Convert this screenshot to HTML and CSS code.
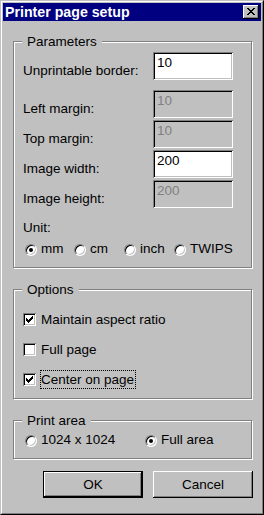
FILE: index.html
```html
<!DOCTYPE html>
<html lang="en">
<head>
  <meta charset="UTF-8">
  <title>Printer page setup</title>
  <link rel="stylesheet" href="styles.css">
</head>
<body>
  <div class="window">
    <div class="frame">
      <div class="titlebar">
        <span class="title">Printer page setup</span>
        <button class="close-btn">
          <svg width="8" height="7" viewBox="0 0 8 7" shape-rendering="crispEdges">
            <path d="M0 0h2v1h-2z M6 0h2v1h-2z M1 1h2v1h-2z M5 1h2v1h-2z M2 2h4v1h-4z M3 3h2v1h-2z M2 4h4v1h-4z M1 5h2v1h-2z M5 5h2v1h-2z M0 6h2v1h-2z M6 6h2v1h-2z" fill="#000"/>
          </svg>
        </button>
      </div>

      <div class="content">
        <!-- Parameters -->
        <div class="group group-params">
          <span class="group-title">Parameters</span>
          <div class="field field-first">
            <label>Unprintable border:</label>
            <input class="textbox" value="10">
          </div>
          <div class="field">
            <label>Left margin:</label>
            <input class="textbox" value="10" disabled>
          </div>
          <div class="field">
            <label>Top margin:</label>
            <input class="textbox" value="10" disabled>
          </div>
          <div class="field">
            <label>Image width:</label>
            <input class="textbox" value="200">
          </div>
          <div class="field">
            <label>Image height:</label>
            <input class="textbox" value="200" disabled>
          </div>
          <div class="unit-label">Unit:</div>
          <div class="radio-row unit-row">
            <div class="radio-item"><span class="radio checked"></span>mm</div>
            <div class="radio-item"><span class="radio"></span>cm</div>
            <div class="radio-item"><span class="radio"></span>inch</div>
            <div class="radio-item"><span class="radio"></span>TWIPS</div>
          </div>
        </div>

        <!-- Options -->
        <div class="group group-options">
          <span class="group-title">Options</span>
          <div class="check-row">
            <span class="check"><svg width="7" height="7" viewBox="0 0 7 7" shape-rendering="crispEdges"><path d="M0 2h1v3h-1z M1 3h1v3h-1z M2 4h1v3h-1z M3 3h1v3h-1z M4 2h1v3h-1z M5 1h1v3h-1z M6 0h1v3h-1z" fill="#000"/></svg></span>
            <span class="check-text">Maintain aspect ratio</span>
          </div>
          <div class="check-row">
            <span class="check"></span>
            <span class="check-text">Full page</span>
          </div>
          <div class="check-row">
            <span class="check"><svg width="7" height="7" viewBox="0 0 7 7" shape-rendering="crispEdges"><path d="M0 2h1v3h-1z M1 3h1v3h-1z M2 4h1v3h-1z M3 3h1v3h-1z M4 2h1v3h-1z M5 1h1v3h-1z M6 0h1v3h-1z" fill="#000"/></svg></span>
            <span class="check-text focused">Center on page</span>
          </div>
        </div>

        <!-- Print area -->
        <div class="group group-area">
          <span class="group-title">Print area</span>
          <div class="radio-row area-row">
            <div class="radio-item"><span class="radio"></span>1024 x 1024</div>
            <div class="radio-item"><span class="radio checked"></span>Full area</div>
          </div>
        </div>

        <div class="buttons">
          <button class="btn btn-default">OK</button>
          <button class="btn">Cancel</button>
        </div>
      </div>
    </div>
  </div>
</body>
</html>
```

FILE: styles.css
```css
body {
  margin: 0;
  background: #c0c0c0;
  font-family: "Liberation Sans", Arial, sans-serif;
  font-size: 13.5px;
  line-height: 15px;
  color: #000;
}

.window {
  width: 264px;
  height: 515px;
  box-sizing: border-box;
  border: 1px solid;
  border-color: #c0c0c0 #000 #000 #c0c0c0;
}

.frame {
  height: 100%;
  box-sizing: border-box;
  border: 1px solid;
  border-color: #fff #808080 #808080 #fff;
  padding: 1px;
}

.titlebar {
  height: 18px;
  background: #000080;
  display: flex;
  align-items: center;
  justify-content: space-between;
  padding: 0 2px;
}

.title {
  color: #fff;
  font-weight: bold;
  font-size: 14.2px;
  line-height: 18px;
}

.close-btn {
  width: 16px;
  height: 14px;
  padding: 3px 0 0 4px;
  margin: 0;
  border: none;
  background: #c0c0c0;
  box-shadow: inset -1px -1px 0 #000, inset 1px 1px 0 #fff, inset -2px -2px 0 #808080;
  display: flex;
  align-items: flex-start;
  box-sizing: border-box;
}

.content {
  padding: 0 9px 0 10px;
}

/* group boxes */
.group {
  position: relative;
  border: 1px solid #808080;
  box-shadow: inset 1px 1px 0 #fff, 1px 1px 0 #fff;
}

.group-title {
  position: absolute;
  top: -8px;
  left: 8px;
  padding: 0 5px;
  background: #c0c0c0;
}

.group-params {
  margin-top: 20px;
  padding: 10px 18px 11px 9px;
}

.group-options {
  margin-top: 21px;
  padding: 20px 9px 9px 9px;
}

.group-area {
  margin-top: 21px;
  padding: 11px 9px 11px 9px;
}

/* text fields */
.field {
  display: flex;
  align-items: flex-end;
  justify-content: space-between;
  margin-top: 2px;
}

.field-first {
  margin-top: 0;
  margin-bottom: 10px;
}

.field label {
  margin-bottom: 2px;
}

.textbox {
  width: 80px;
  height: 28px;
  box-sizing: border-box;
  margin: 0;
  padding: 3px 4px 10px;
  border: none;
  outline: none;
  background: #fff;
  font: inherit;
  line-height: 15px;
  color: #000;
  box-shadow: inset 1px 1px 0 #808080, inset -1px -1px 0 #fff, inset 2px 2px 0 #000, inset -2px -2px 0 #c0c0c0;
}

.textbox:disabled {
  background: #c0c0c0;
  color: #808080;
}

.unit-label {
  margin-top: 12px;
}

/* radios */
.radio-row {
  display: grid;
}

.unit-row {
  margin-top: 6px;
  grid-template-columns: 49px 50px 50px auto;
}

.area-row {
  grid-template-columns: 120px auto;
}

.radio-item {
  display: flex;
  align-items: flex-start;
  white-space: nowrap;
}

.radio {
  position: relative;
  flex: none;
  width: 12px;
  height: 12px;
  box-sizing: border-box;
  margin: 3px 4px 0 2px;
  border-radius: 50%;
  background: #fff;
  border: 1px solid;
  border-color: #808080 #fff #fff #808080;
  box-shadow: inset 1px 1px 0 #000, inset -1px -1px 0 #c0c0c0;
}

.radio.checked::after {
  content: "";
  position: absolute;
  left: 3px;
  top: 3px;
  width: 4px;
  height: 4px;
  border-radius: 50%;
  background: #000;
}

/* checkboxes */
.check-row {
  display: flex;
  align-items: center;
  height: 19px;
  margin-top: 11px;
}

.check-row:first-of-type {
  margin-top: 0;
}

.check {
  flex: none;
  width: 13px;
  height: 13px;
  box-sizing: border-box;
  padding: 3px;
  display: flex;
  background: #fff;
  box-shadow: inset 1px 1px 0 #808080, inset -1px -1px 0 #fff, inset 2px 2px 0 #000, inset -2px -2px 0 #c0c0c0;
}

.check-text {
  margin-left: 4px;
  padding: 1px 1px 1px 0;
  border: 1px dotted transparent;
}

.check-text.focused {
  border-color: #000;
}

/* buttons */
.buttons {
  display: flex;
  gap: 10px;
  margin: 12px -1px 0 0;
  padding-left: 30px;
}

.btn {
  width: 100px;
  height: 27px;
  margin: 0;
  padding: 0;
  border: none;
  background: #c0c0c0;
  font: inherit;
  color: #000;
  box-sizing: border-box;
  box-shadow: inset -1px -1px 0 #000, inset 1px 1px 0 #fff, inset -2px -2px 0 #808080;
}

.btn-default {
  border: 1px solid #000;
}
```
